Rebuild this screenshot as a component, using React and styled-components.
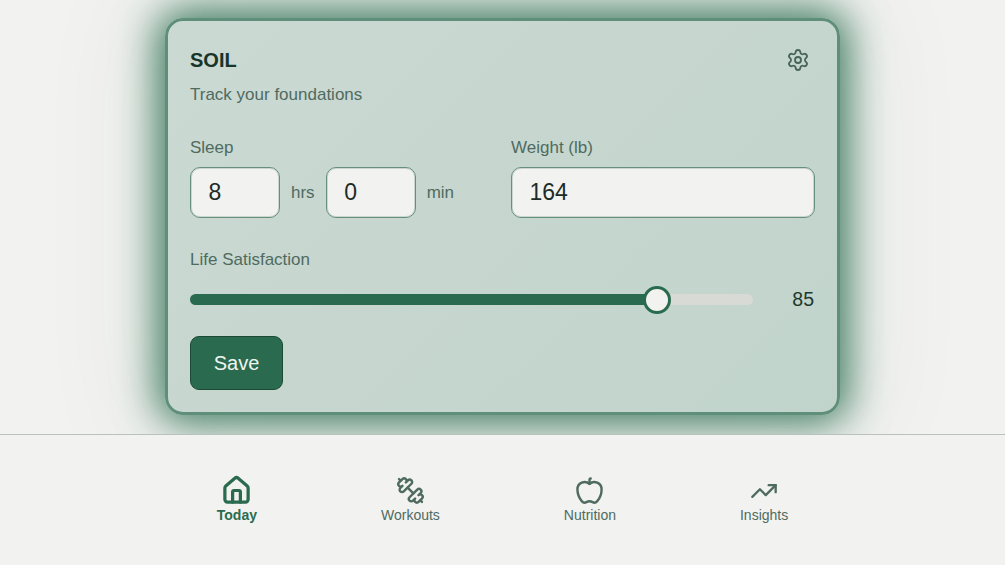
import React from "react";
import styled, { createGlobalStyle } from "styled-components";
import { Apple, Dumbbell, House, Settings, TrendingUp } from "lucide-react";

const GlobalStyle = createGlobalStyle`
  html, body {
    margin: 0;
    padding: 0;
    background: #f2f2f0;
    font-family: "Liberation Sans", Arial, sans-serif;
  }
  * {
    box-sizing: border-box;
  }
`;

const Page = styled.div`
  width: 1005px;
  height: 565px;
  display: flex;
  flex-direction: column;
  overflow: hidden;
`;

const Main = styled.main`
  height: 435px;
  padding-top: 18px;
  display: flex;
  justify-content: center;
  align-items: flex-start;
  border-bottom: 1px solid #b7c2bd;
  overflow: hidden;
`;

const Card = styled.section`
  width: 675px;
  height: 397px;
  padding: 27px 22px 0 22px;
  border: 3px solid #5f8f7b;
  border-radius: 18px;
  background: linear-gradient(135deg, #cbd9d3 0%, #c1d4cb 100%);
  box-shadow: 0 0 40px 8px rgba(47, 112, 84, 0.92), 0 0 110px 30px rgba(47, 112, 84, 0.06);
`;

const Header = styled.div`
  display: flex;
  justify-content: space-between;
  align-items: flex-start;
`;

const Title = styled.h1`
  margin: 0;
  font-size: 20px;
  line-height: 24px;
  font-weight: 700;
  color: #17352a;
`;

const Subtitle = styled.p`
  margin: 12px 0 0;
  font-size: 17px;
  line-height: 22px;
  color: #4f6b60;
`;

const GearButton = styled.div`
  width: 24px;
  height: 24px;
  color: #47645a;
  margin-right: 5px;
`;

const FormRow = styled.div`
  display: flex;
  margin-top: 31px;
`;

const SleepColumn = styled.div`
  width: 321px;
`;

const WeightColumn = styled.div`
  width: 304px;
`;

const Label = styled.div`
  font-size: 17px;
  line-height: 22px;
  color: #4f6b60;
  margin-bottom: 8px;
`;

const InputRow = styled.div`
  display: flex;
  align-items: center;
`;

const Field = styled.div`
  width: ${(p) => (p.$wide ? "100%" : "90px")};
  height: 51px;
  padding-left: 17.5px;
  display: flex;
  align-items: center;
  font-size: 23px;
  color: #1d2b26;
  background: #f2f2f0;
  border: 1px solid #668f7d;
  border-radius: 10px;
  box-shadow: inset 0 0 0 1px rgba(111, 148, 132, 0.3);
`;

const Unit = styled.span`
  margin: 0 11px;
  font-size: 17px;
  color: #4f6b60;
`;

const SliderLabel = styled(Label)`
  margin-top: 31px;
  margin-bottom: 17px;
`;

const SliderRow = styled.div`
  display: flex;
  align-items: center;
  justify-content: space-between;
`;

const Track = styled.div`
  position: relative;
  width: 563px;
  height: 11px;
  border-radius: 6px;
  background: #d8dad6;
`;

const Fill = styled.div`
  height: 100%;
  border-radius: 6px;
  background: #2a6b4f;
`;

const Thumb = styled.div`
  position: absolute;
  top: 50%;
  width: 28px;
  height: 28px;
  transform: translate(-50%, -50%);
  border: 3px solid #2a6b4f;
  border-radius: 50%;
  background: #f2f2f0;
`;

const SliderValue = styled.span`
  margin-right: 1px;
  font-size: 19.5px;
  color: #1d3a2f;
`;

const SaveButton = styled.button`
  display: block;
  width: 93px;
  height: 54px;
  margin-top: 25px;
  padding: 0;
  font: inherit;
  font-size: 20px;
  color: #eef5f1;
  background: #2a6b4f;
  border: 1px solid #1c4a37;
  border-radius: 9px;
`;

const Nav = styled.nav`
  flex: 1;
  display: flex;
  justify-content: center;
  align-items: flex-start;
  gap: 124px;
  padding-top: 41px;
`;

const NavItem = styled.div`
  display: flex;
  flex-direction: column;
  align-items: center;
  font-size: 14px;
  line-height: 20px;
  font-weight: ${(p) => (p.$active ? 700 : 400)};
  color: ${(p) => (p.$active ? "#2a6b4f" : "#4f6b60")};
`;

const NavIcon = styled.div`
  height: 29px;
  display: flex;
  align-items: center;
  justify-content: center;
  transform: ${(p) => (p.$flip ? "scaleX(-1)" : "none")};
`;

const navItems = [
  { label: "Today", Icon: House, active: true, size: 31, stroke: 2.5 },
  { label: "Workouts", Icon: Dumbbell, flip: true, size: 29, stroke: 2 },
  { label: "Nutrition", Icon: Apple, size: 29, stroke: 2 },
  { label: "Insights", Icon: TrendingUp, size: 28, stroke: 2 },
];

const satisfaction = 85;
const thumbPercent = 83;

export default function App() {
  return (
    <Page>
      <GlobalStyle />
      <Main>
        <Card>
          <Header>
            <div>
              <Title>SOIL</Title>
              <Subtitle>Track your foundations</Subtitle>
            </div>
            <GearButton>
              <Settings size={24} strokeWidth={1.8} />
            </GearButton>
          </Header>
          <FormRow>
            <SleepColumn>
              <Label>Sleep</Label>
              <InputRow>
                <Field>8</Field>
                <Unit>hrs</Unit>
                <Field>0</Field>
                <Unit>min</Unit>
              </InputRow>
            </SleepColumn>
            <WeightColumn>
              <Label>Weight (lb)</Label>
              <Field $wide>164</Field>
            </WeightColumn>
          </FormRow>
          <SliderLabel>Life Satisfaction</SliderLabel>
          <SliderRow>
            <Track>
              <Fill style={{ width: `${thumbPercent}%` }} />
              <Thumb style={{ left: `${thumbPercent}%` }} />
            </Track>
            <SliderValue>{satisfaction}</SliderValue>
          </SliderRow>
          <SaveButton>Save</SaveButton>
        </Card>
      </Main>
      <Nav>
        {navItems.map(({ label, Icon, active, flip, size, stroke }) => (
          <NavItem key={label} $active={active}>
            <NavIcon $flip={flip}>
              <Icon size={size} strokeWidth={stroke} />
            </NavIcon>
            {label}
          </NavItem>
        ))}
      </Nav>
    </Page>
  );
}
